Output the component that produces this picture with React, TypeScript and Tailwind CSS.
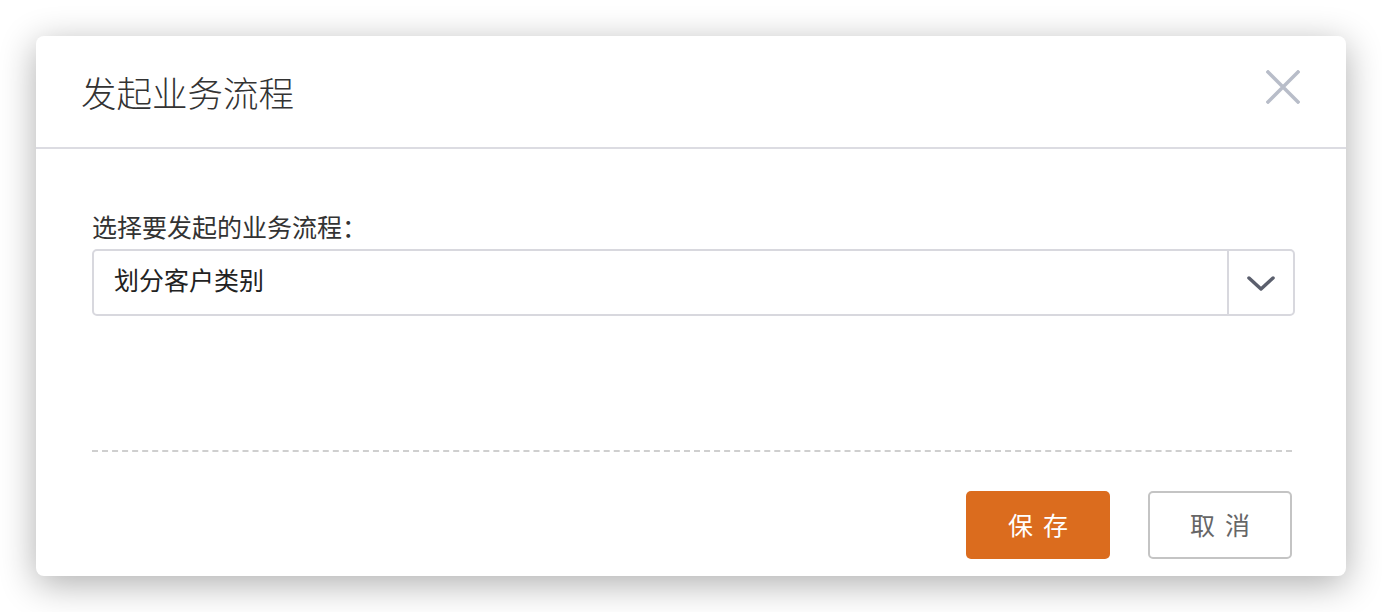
export default function App() {
  const font = { fontFamily: '"Noto Sans CJK SC", "Noto Sans", sans-serif' };
  return (
    <div className="w-[1382px] h-[612px] bg-white p-[36px]" style={font}>
      <div className="w-[1310px] h-[540px] bg-white rounded-[8px] shadow-[0_8px_36px_rgba(0,0,0,0.32)] flex flex-col">
        {/* header */}
        <div className="h-[113px] flex items-center justify-between pl-[45px] pr-[44px] border-b-2 border-[#dcdce2] shrink-0">
          <h1 className="text-[35.5px] leading-none font-light text-[#333]">发起业务流程</h1>
          <svg width="34" height="34" viewBox="0 0 34 34" className="text-[#b8bdc9] mb-[10px] mr-[2px]">
            <path d="M2 2 L32 32 M32 2 L2 32" stroke="currentColor" strokeWidth="3.5" strokeLinecap="square" />
          </svg>
        </div>

        {/* body */}
        <div className="flex-1 flex flex-col px-[56px] pt-[60px]">
          <label className="text-[25px] leading-[34px] text-[#333]">选择要发起的业务流程：</label>
          <div className="mt-[6px] h-[67px] w-[1203px] border-2 border-[#d8d8de] rounded-[5px] flex items-stretch">
            <div className="flex-1 flex items-center pl-[20px] pb-[6px] text-[25px] text-[#222]">划分客户类别</div>
            <div className="w-[66px] border-l-2 border-[#d8d8de] flex items-center justify-center">
              <svg width="30" height="18" viewBox="0 0 30 18">
                <path d="M3 4 L15 15 L27 4" fill="none" stroke="#5b5f6d" strokeWidth="3.5" strokeLinecap="round" strokeLinejoin="round" />
              </svg>
            </div>
          </div>

          <div className="mt-[134px] w-[1200px] border-t-2 border-dashed border-[#cfcfcf]" />

          <div className="mt-[39px] w-[1200px] flex justify-end gap-[38px]">
            <button className="w-[144px] h-[68px] rounded-[5px] bg-[#db6c1e] text-white text-[25px] tracking-[10px] pl-[10px]">
              保存
            </button>
            <button className="w-[144px] h-[68px] rounded-[5px] border-2 border-[#c4c4c4] bg-white text-[#666] text-[25px] tracking-[10px] pl-[10px]">
              取消
            </button>
          </div>
        </div>
      </div>
    </div>
  );
}
